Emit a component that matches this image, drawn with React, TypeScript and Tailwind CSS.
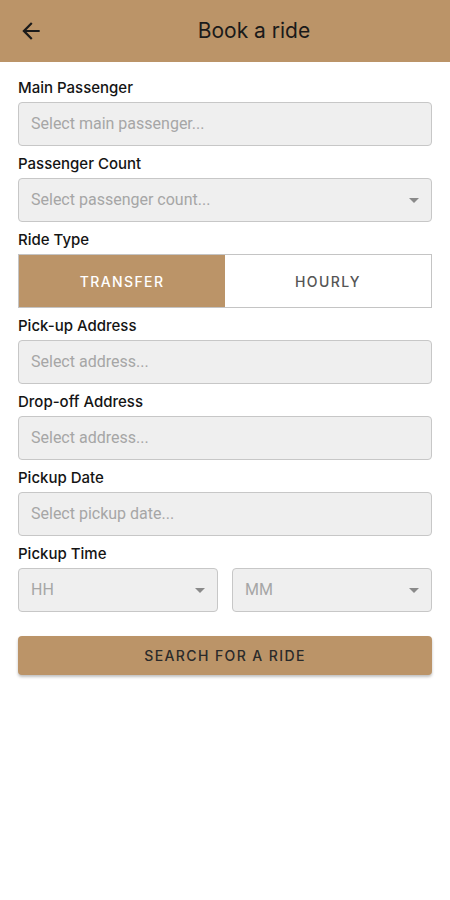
import React from "react";

const tan = "bg-[#bb9468]";

const Caret = () => (
  <svg width="10" height="5" viewBox="0 0 10 5" className="shrink-0">
    <path d="M0 0h10L5 5z" fill="#8a8a8a" />
  </svg>
);

const Field = ({
  label,
  placeholder,
  dropdown,
  first,
}: {
  label: string;
  placeholder: string;
  dropdown?: boolean;
  first?: boolean;
}) => (
  <div className={first ? "" : "mt-2"}>
    <div className="h-5 mb-1 leading-5 text-[15px] font-medium text-[#141414]">
      {label}
    </div>
    <div className="h-[44px] flex items-center justify-between px-3 bg-[#efefef] border-[1.5px] border-[#c7c7c7] rounded-[4px]">
      <span className="text-[16px] text-[#a6a6a6] font-['Roboto',sans-serif]">{placeholder}</span>
      {dropdown && <Caret />}
    </div>
  </div>
);

const App = () => {
  return (
    <div className="w-[450px] h-[900px] bg-white font-['Inter',sans-serif]">
      {/* Top bar */}
      <div className={`h-[62px] flex items-center ${tan}`}>
        <div className="w-[62px] flex justify-center">
          <svg width="26" height="26" viewBox="0 0 24 24">
            <path
              d="M20 11H7.83l5.59-5.59L12 4l-8 8 8 8 1.41-1.41L7.83 13H20v-2z"
              fill="#1a1a1a"
            />
          </svg>
        </div>
        <h1 className="flex-1 text-center pr-1 text-[21px] text-[#1a1a1a]">Book a ride</h1>
      </div>

      {/* Form */}
      <div className="px-[18px] pt-4">
        <Field first label="Main Passenger" placeholder="Select main passenger..." />
        <Field label="Passenger Count" placeholder="Select passenger count..." dropdown />

        <div className="mt-2">
          <div className="h-5 mb-1 leading-5 text-[15px] font-medium text-[#141414]">Ride Type</div>
          <div className="h-[54px] grid grid-cols-2 border-[1.5px] border-[#c4c4c4]">
            <div className={`flex items-center justify-center ${tan} text-white text-[14px] font-medium tracking-[0.1em]`}>
              TRANSFER
            </div>
            <div className="flex items-center justify-center bg-white text-[#555] text-[14px] font-medium tracking-[0.1em]">
              HOURLY
            </div>
          </div>
        </div>

        <Field label="Pick-up Address" placeholder="Select address..." />
        <Field label="Drop-off Address" placeholder="Select address..." />
        <Field label="Pickup Date" placeholder="Select pickup date..." />

        <div className="mt-2">
          <div className="h-5 mb-1 leading-5 text-[15px] font-medium text-[#141414]">Pickup Time</div>
          <div className="grid grid-cols-2 gap-[14px]">
            {["HH", "MM"].map((p) => (
              <div
                key={p}
                className="h-[44px] flex items-center justify-between px-3 bg-[#efefef] border-[1.5px] border-[#c7c7c7] rounded-[4px]"
              >
                <span className="text-[16px] text-[#a6a6a6] font-['Roboto',sans-serif]">{p}</span>
                <Caret />
              </div>
            ))}
          </div>
        </div>

        <button
          className={`mt-6 w-full h-[39px] rounded-[4px] ${tan} shadow-[0_2px_3px_rgba(0,0,0,0.25)] text-[14px] font-medium tracking-[0.1em] text-[#2a2a2a]`}
        >
          SEARCH FOR A RIDE
        </button>
      </div>
    </div>
  );
};

export default App;
